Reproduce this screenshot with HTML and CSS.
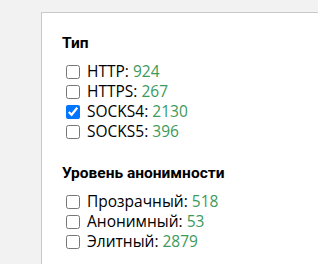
FILE: index.html
```html
<!DOCTYPE html>
<html lang="ru">
<head>
    <meta charset="UTF-8">
    <title>Фильтр прокси</title>
    <link rel="stylesheet" href="styles.css">
</head>
<body>
    <div class="filter-panel">
        <div class="filter-group">
            <h3>Тип</h3>
            <label class="option"><input type="checkbox"> HTTP: <span class="count">924</span></label>
            <label class="option"><input type="checkbox"> HTTPS: <span class="count">267</span></label>
            <label class="option"><input type="checkbox" checked> SOCKS4: <span class="count">2130</span></label>
            <label class="option"><input type="checkbox"> SOCKS5: <span class="count">396</span></label>
        </div>
        <div class="filter-group">
            <h3>Уровень анонимности</h3>
            <label class="option"><input type="checkbox"> Прозрачный: <span class="count">518</span></label>
            <label class="option"><input type="checkbox"> Анонимный: <span class="count">53</span></label>
            <label class="option"><input type="checkbox"> Элитный: <span class="count">2879</span></label>
        </div>
    </div>
</body>
</html>
```

FILE: styles.css
```css
body {
    margin: 0;
    padding: 12px 0 0 41px;
    background: #f2f2f2;
    font-family: "Open Sans", Arial, sans-serif;
    font-size: 15.5px;
    color: #000;
    overflow: hidden;
    height: 252px;
}

.filter-panel {
    background: #fff;
    border: 1px solid #c8c8c8;
    border-right: none;
    border-bottom: none;
    padding: 20px 0 20px 20px;
    height: 300px;
}

.filter-group {
    margin-bottom: 22px;
}

.filter-group h3 {
    margin: 0 0 8px 0;
    font-family: Roboto, "Open Sans", sans-serif;
    font-size: 15.5px;
    line-height: 20px;
    font-weight: bold;
}

.option {
    display: block;
    line-height: 20px;
}

.option input {
    margin: 0 3px 0 4px;
    width: 14px;
    height: 14px;
    vertical-align: -2px;
}

.count {
    color: #3c9a5c;
}
```
